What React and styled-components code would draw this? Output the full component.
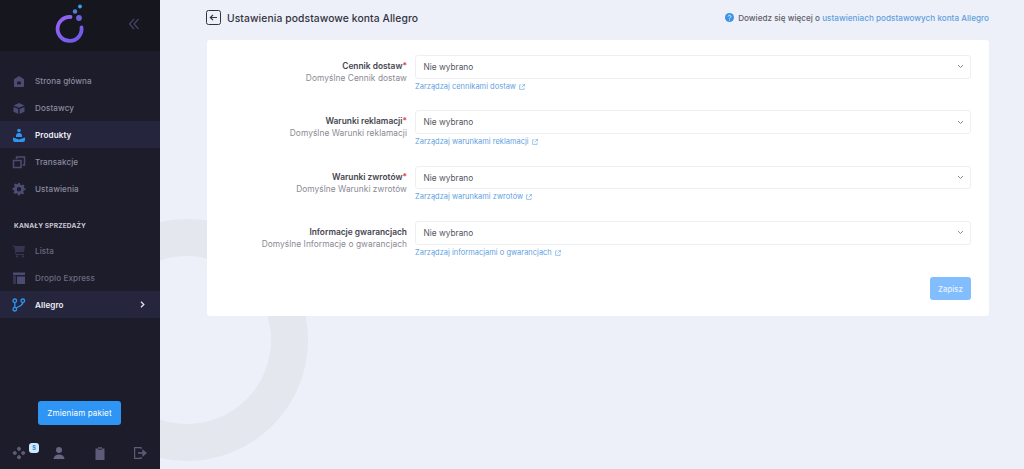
import React from "react";
import styled, { createGlobalStyle } from "styled-components";

const Global = createGlobalStyle`
  html, body { margin: 0; padding: 0; height: 100%; }
  body { font-family: "Inter", "Liberation Sans", sans-serif; background: #edf0f8; }
  * { box-sizing: border-box; }
`;

const Page = styled.div`
  display: flex;
  width: 1024px;
  height: 469px;
  overflow: hidden;
`;

const Sidebar = styled.aside`
  width: 160px;
  flex: none;
  display: flex;
  flex-direction: column;
  background: #1c1c2b;
  position: relative;
  z-index: 1;
`;

const Brand = styled.div`
  height: 51px;
  flex: none;
  background: #16161f;
  display: flex;
  align-items: center;
  padding: 0 20px 0 55px;
  justify-content: space-between;
`;

const CollapseButton = styled.span`
  display: flex;
  margin-bottom: 3px;
`;

const Nav = styled.nav`
  display: flex;
  flex-direction: column;
  padding-top: ${(p) => (p.$flush ? 0 : 16)}px;
`;

const SectionLabel = styled.div`
  font-size: 6.6px;
  font-weight: 700;
  letter-spacing: 0.15px;
  color: #c8c8d4;
  padding: 0 0 0 14px;
  margin: 19px 0 6px;
  line-height: 10px;
`;

const NavItem = styled.a`
  height: 27px;
  display: flex;
  align-items: center;
  gap: 9px;
  padding: 0 14px 0 12px;
  font-size: 8.1px;
  font-weight: ${(p) => (p.$active ? 600 : 500)};
  letter-spacing: 0.1px;
  color: ${(p) => (p.$active ? "#f1f1f6" : p.$dim ? "#6b6b80" : "#8b8b9e")};
  background: ${(p) => (p.$active ? "#25263e" : "transparent")};
`;

const NavText = styled.span`
  flex: 1;
`;

const IconSlot = styled.span`
  width: 14px;
  height: 14px;
  flex: none;
  display: flex;
  svg { display: block; }
`;

const Spacer = styled.div`
  flex: 1;
`;

const UpgradeRow = styled.div`
  display: flex;
  justify-content: center;
  padding-bottom: 18px;
  margin-left: -1px;
`;

const UpgradeButton = styled.button`
  width: 83px;
  height: 24px;
  border: 0;
  border-radius: 3px;
  background: #2e95f4;
  color: #fff;
  font: 400 8.1px "Inter", sans-serif;
  letter-spacing: 0.1px;
  padding: 0;
`;

const FooterBar = styled.div`
  height: 26px;
  padding: 0 13px 6px 12px;
  display: flex;
  align-items: center;
  justify-content: space-between;
`;

const FooterIcon = styled.span`
  position: relative;
  display: flex;
  width: 14px;
  height: 14px;
`;

const Badge = styled.span`
  position: absolute;
  left: 17px;
  top: -3px;
  width: 10px;
  height: 10px;
  border-radius: 3px;
  background: #cfe8fb;
  color: #2e85d8;
  font-size: 5.5px;
  font-weight: 700;
  line-height: 10px;
  text-align: center;
`;

const Main = styled.main`
  flex: 1;
  position: relative;
  overflow: hidden;
  padding: 0 35px 0 47px;
`;

const Ring = styled.div`
  position: absolute;
  left: -94px;
  top: 219px;
  width: 242px;
  height: 242px;
  border-radius: 50%;
  border: 37px solid #e4e7ee;
`;

const Header = styled.header`
  position: relative;
  height: 40px;
  display: flex;
  align-items: center;
  justify-content: space-between;
  padding-bottom: 5px;
`;

const TitleGroup = styled.div`
  display: flex;
  align-items: center;
  gap: 6px;
  margin-left: -1px;
`;

const BackButton = styled.span`
  width: 15px;
  height: 15px;
  border: 1.3px solid #33333f;
  border-radius: 2.5px;
  display: flex;
  align-items: center;
  justify-content: center;
`;

const Title = styled.h1`
  margin: 0;
  font-size: 10.3px;
  font-weight: 500;
  letter-spacing: 0.1px;
  color: #33333f;
`;

const Help = styled.div`
  display: flex;
  align-items: center;
  gap: 4px;
  font-size: 8.12px;
  font-weight: 500;
  letter-spacing: 0.03px;
  color: #5c5c68;
`;

const HelpLink = styled.a`
  color: #5f9fe0;
`;

const Card = styled.section`
  position: relative;
  height: 276px;
  background: #fff;
  border-radius: 3px;
  padding: 15px 18px 16px 0;
  display: flex;
  flex-direction: column;
`;

const FormRow = styled.div`
  display: grid;
  grid-template-columns: 200px 1fr;
  column-gap: 8px;
  height: 55.4px;
`;

const LabelCol = styled.div`
  text-align: right;
  padding-top: 5px;
`;

const FieldName = styled.div`
  font-size: 8.4px;
  font-weight: 600;
  line-height: 12px;
  color: #45454f;
`;

const Star = styled.span`
  color: #e23b4e;
`;

const FieldHint = styled.div`
  font-size: 8.35px;
  font-weight: 400;
  line-height: 12px;
  letter-spacing: 0.05px;
  color: #8a8a94;
`;

const Select = styled.div`
  height: 23.5px;
  border: 1px solid #eeeff2;
  border-radius: 3px;
  background: #fff;
  display: flex;
  align-items: center;
  justify-content: space-between;
  padding: 0 6px 0 7.5px;
  font-size: 8.3px;
  color: #55555f;
`;

const ManageLink = styled.a`
  display: flex;
  align-items: center;
  gap: 3px;
  margin-top: 3px;
  font-size: 7.45px;
  line-height: 10px;
  letter-spacing: 0.03px;
  color: #5f9fe0;
`;

const Actions = styled.div`
  margin-top: auto;
  display: flex;
  justify-content: flex-end;
`;

const SaveButton = styled.button`
  width: 41px;
  height: 23px;
  border: 0;
  border-radius: 3px;
  background: #82bdfd;
  color: #e6f2ff;
  font: 500 7.8px "Inter", sans-serif;
  padding: 0;
`;

const DIM = "#4c4c72";

const Logo = () => (
  <svg width="30" height="44" viewBox="0 0 30 44" overflow="visible">
    <defs>
      <linearGradient id="lg" x1="0" y1="0" x2="1" y2="1">
        <stop offset="0" stopColor="#9a62f5" />
        <stop offset="1" stopColor="#6a5ae8" />
      </linearGradient>
    </defs>
    <path d="M15.5 13 A12 12 0 1 0 26.5 23.5" fill="none" stroke="url(#lg)" strokeWidth="3.8" strokeLinecap="round" />
    <circle cx="24" cy="14" r="2.9" fill="#6b62d8" />
    <circle cx="20" cy="7.5" r="2.2" fill="#4f7fd8" />
    <circle cx="25" cy="2.5" r="1.9" fill="#3ea0e8" />
  </svg>
);

const Collapse = () => (
  <svg width="12" height="12" viewBox="0 0 12 12" fill="none" stroke="#43436a" strokeWidth="1.2">
    <path d="M6 1 1.5 6 6 11M10.5 1 6 6l4.5 5" />
  </svg>
);

const HomeIcon = () => (
  <svg width="14" height="14" viewBox="0 0 14 14">
    <path fill={DIM} d="M2 5.2 7 2l5 3.2V12a1 1 0 0 1-1 1H3a1 1 0 0 1-1-1z" />
    <rect x="5" y="7.5" width="4" height="3" rx="1" fill="#1c1c2b" />
  </svg>
);
const BoxIcon = () => (
  <svg width="14" height="14" viewBox="0 0 14 14">
    <path fill={DIM} d="M7 2 12.5 4.4 7 6.8 1.5 4.4zM1.5 6l4.8 2v5L1.5 10.8zM12.5 6 7.7 8v5l4.8-2.2z" />
  </svg>
);
const ProductIcon = () => (
  <svg width="14" height="15" viewBox="0 0 14 15">
    <circle cx="7" cy="2.5" r="1.8" fill="#2e95f4" />
    <path fill="#2e95f4" d="M4 8a3 3 0 0 1 6 0v1H4z" />
    <path fill="#2e95f4" d="M1 9.5 7 11.5l6-2v2.5a2 2 0 0 1-2 2H3a2 2 0 0 1-2-2z" />
  </svg>
);
const SwapIcon = () => (
  <svg width="14" height="14" viewBox="0 0 14 14" fill="none" stroke={DIM} strokeWidth="1.5">
    <path d="M4.5 4V2h8v8h-2" />
    <path d="M1.5 5.5h7.5V12.5H1.5z" />
  </svg>
);
const GearIcon = () => (
  <svg width="14" height="14" viewBox="0 0 14 14">
    <path fill={DIM} fillRule="evenodd" d="M6 1h2l.4 1.7 1.3.6 1.5-.9 1.4 1.4-.9 1.5.6 1.3L13.5 6v2l-1.7.4-.6 1.3.9 1.5-1.4 1.4-1.5-.9-1.3.6L8 13.5H6l-.4-1.7-1.3-.6-1.5.9-1.4-1.4.9-1.5-.6-1.3L.5 8V6l1.7-.4.6-1.3-.9-1.5 1.4-1.4 1.5.9 1.3-.6zM7 5a2.2 2.2 0 1 0 0 4.4A2.2 2.2 0 0 0 7 5z" />
  </svg>
);
const CartIcon = () => (
  <svg width="14" height="14" viewBox="0 0 14 14">
    <path fill="#353550" d="M3 2h10l-1 6H4zM.5 1.5H3L4.5 10H12v1H3.6L2.2 2.6H.5z" />
    <circle cx="5" cy="12.4" r="1.1" fill="#353550" />
    <circle cx="11" cy="12.4" r="1.1" fill="#353550" />
  </svg>
);
const LayoutIcon = () => (
  <svg width="14" height="14" viewBox="0 0 14 14">
    <rect x="1" y="1.5" width="12" height="2.5" fill={DIM} />
    <rect x="1" y="4.5" width="3" height="8.5" fill="#353550" />
    <rect x="5" y="5.5" width="8" height="7.5" fill={DIM} />
  </svg>
);
const NodesIcon = () => (
  <svg width="14" height="14" viewBox="0 0 14 14" fill="none" stroke="#2e95f4" strokeWidth="1.3">
    <circle cx="2.8" cy="2.8" r="1.8" />
    <circle cx="10.8" cy="2.8" r="1.8" />
    <circle cx="2.8" cy="11.2" r="1.8" />
    <path d="M2.8 4.6v4.8M10.8 4.6C10.8 8 7 8 4.3 10" />
  </svg>
);
const Chevron = () => (
  <svg width="7" height="7" viewBox="0 0 7 7" fill="none" stroke="#e4e4ec" strokeWidth="1.3">
    <path d="M2 .8 4.8 3.5 2 6.2" />
  </svg>
);

const GameIcon = () => (
  <svg width="14" height="14" viewBox="0 0 14 14" fill="#5c5c78">
    <rect x="5.2" y="1" width="3.6" height="3.6" rx="1" transform="rotate(45 7 2.8)" />
    <rect x="5.2" y="9.4" width="3.6" height="3.6" rx="1" transform="rotate(45 7 11.2)" />
    <rect x="1" y="5.2" width="3.6" height="3.6" rx="1" transform="rotate(45 2.8 7)" />
    <rect x="9.4" y="5.2" width="3.6" height="3.6" rx="1" transform="rotate(45 11.2 7)" />
  </svg>
);
const UserIcon = () => (
  <svg width="14" height="14" viewBox="0 0 14 14" fill="#666682">
    <circle cx="7" cy="4" r="3" />
    <path d="M1.5 13a5.5 4.6 0 0 1 11 0z" />
  </svg>
);
const ClipIcon = () => (
  <svg width="14" height="15" viewBox="0 0 14 15" fill="#5c5c78">
    <path d="M2.5 2.5H5V1.2h4v1.3h2.5V14h-9z" />
    <path d="M5 2.5h4v1.5H5z" fill="#33334a" />
  </svg>
);
const LogoutIcon = () => (
  <svg width="14" height="14" viewBox="0 0 14 14" fill="none" stroke="#5c5c78" strokeWidth="1.2">
    <path d="M8 3V1.6H1.6v10.8H8V11" />
    <path d="M5 7h6.5" strokeWidth="1.6" />
    <path d="M10 4.4 13 7l-3 2.6z" fill="#5c5c78" />
  </svg>
);

const ExternalIcon = () => (
  <svg width="6" height="6" viewBox="0 0 8 8" fill="none" stroke="#5f9fe0" strokeWidth="0.8">
    <path d="M3 1.2H.8v6h6V5M4.5.5h3v3M7.3.7 3.5 4.5" />
  </svg>
);
const CaretDown = () => (
  <svg width="7" height="5" viewBox="0 0 7 5" fill="none" stroke="#7d7d88" strokeWidth="0.9">
    <path d="M1 1l2.5 2.5L6 1" />
  </svg>
);
const BackArrow = () => (
  <svg width="9" height="9" viewBox="0 0 9 9" fill="none" stroke="#33333f" strokeWidth="1.2">
    <path d="M8 4.5H1.5M4 1.8 1.3 4.5 4 7.2" />
  </svg>
);
const HelpIcon = () => (
  <svg width="9" height="9" viewBox="0 0 10 10">
    <circle cx="5" cy="5" r="5" fill="#3a93e6" />
    <path d="M3.5 3.9a1.5 1.5 0 1 1 2.3 1.3c-.5.3-.8.5-.8 1" fill="none" stroke="#fff" strokeWidth="1" />
    <circle cx="5" cy="7.7" r=".6" fill="#fff" />
  </svg>
);

const mainNav = [
  ["Strona główna", HomeIcon],
  ["Dostawcy", BoxIcon],
  ["Produkty", ProductIcon, true],
  ["Transakcje", SwapIcon],
  ["Ustawienia", GearIcon],
];

const channels = [
  ["Lista", CartIcon, false, true],
  ["Droplo Express", LayoutIcon, false, true],
  ["Allegro", NodesIcon, true, false, true],
];

const fields = [
  { name: "Cennik dostaw", req: true, hint: "Domyślne Cennik dostaw", link: "Zarządzaj cennikami dostaw" },
  { name: "Warunki reklamacji", req: true, hint: "Domyślne Warunki reklamacji", link: "Zarządzaj warunkami reklamacji" },
  { name: "Warunki zwrotów", req: true, hint: "Domyślne Warunki zwrotów", link: "Zarządzaj warunkami zwrotów" },
  { name: "Informacje gwarancjach", hint: "Domyślne Informacje o gwarancjach", link: "Zarządzaj informacjami o gwarancjach" },
];

const renderItem = ([label, Icon, active, dim, chevron]) => (
  <NavItem key={label} $active={active} $dim={dim}>
    <IconSlot><Icon /></IconSlot>
    <NavText>{label}</NavText>
    {chevron && <Chevron />}
  </NavItem>
);

export default function App() {
  return (
    <Page>
      <Global />
      <Sidebar>
        <Brand>
          <Logo />
          <CollapseButton><Collapse /></CollapseButton>
        </Brand>
        <Nav>{mainNav.map(renderItem)}</Nav>
        <SectionLabel>KANAŁY SPRZEDAŻY</SectionLabel>
        <Nav as="div" $flush>{channels.map(renderItem)}</Nav>
        <Spacer />
        <UpgradeRow>
          <UpgradeButton>Zmieniam pakiet</UpgradeButton>
        </UpgradeRow>
        <FooterBar>
          <FooterIcon><GameIcon /><Badge>S</Badge></FooterIcon>
          <FooterIcon><UserIcon /></FooterIcon>
          <FooterIcon><ClipIcon /></FooterIcon>
          <FooterIcon><LogoutIcon /></FooterIcon>
        </FooterBar>
      </Sidebar>
      <Main>
        <Ring />
        <Header>
          <TitleGroup>
            <BackButton><BackArrow /></BackButton>
            <Title>Ustawienia podstawowe konta Allegro</Title>
          </TitleGroup>
          <Help>
            <HelpIcon />
            <span>Dowiedz się więcej o <HelpLink>ustawieniach podstawowych konta Allegro</HelpLink></span>
          </Help>
        </Header>
        <Card>
          {fields.map((f) => (
            <FormRow key={f.name}>
              <LabelCol>
                <FieldName>{f.name}{f.req && <Star>*</Star>}</FieldName>
                <FieldHint>{f.hint}</FieldHint>
              </LabelCol>
              <div>
                <Select>Nie wybrano<CaretDown /></Select>
                <ManageLink>{f.link}<ExternalIcon /></ManageLink>
              </div>
            </FormRow>
          ))}
          <Actions>
            <SaveButton>Zapisz</SaveButton>
          </Actions>
        </Card>
      </Main>
    </Page>
  );
}
